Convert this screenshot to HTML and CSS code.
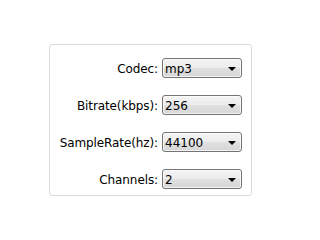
FILE: index.html
```html
<!DOCTYPE html>
<html>
<head>
<meta charset="utf-8">
<link rel="stylesheet" href="styles.css">
</head>
<body>
<div class="group">
  <div class="form">
    <label class="label">Codec:</label>
    <div class="combo"><span class="value">mp3</span><span class="arrow"></span></div>
    <label class="label">Bitrate(kbps):</label>
    <div class="combo"><span class="value">256</span><span class="arrow"></span></div>
    <label class="label">SampleRate(hz):</label>
    <div class="combo"><span class="value">44100</span><span class="arrow"></span></div>
    <label class="label">Channels:</label>
    <div class="combo"><span class="value">2</span><span class="arrow"></span></div>
  </div>
</div>
</body>
</html>
```

FILE: styles.css
```css
html, body {
  margin: 0;
  padding: 0;
  background: #ffffff;
}
body {
  width: 302px;
  height: 240px;
  font-family: "DejaVu Sans", "Noto Sans", sans-serif;
  font-size: 12px;
  color: #000000;
}
.group {
  box-sizing: border-box;
  margin: 44px 0 0 49px;
  width: 203px;
  height: 152px;
  border: 1px solid #d3dde3;
  border-radius: 3px;
  padding: 12px 9px 0 9px;
}
.form {
  display: grid;
  grid-template-columns: 1fr 80px;
  column-gap: 4px;
  row-gap: 15px;
  align-items: center;
}
.label {
  justify-self: end;
  white-space: nowrap;
  line-height: 20px;
  padding-top: 2px;
  letter-spacing: -0.1px;
}
.combo {
  box-sizing: border-box;
  height: 20px;
  border: 1px solid #747474;
  border-radius: 3px;
  background: linear-gradient(#f4f4f4 0%, #ececec 50%, #e0e0e0 51%, #d6d6d6 100%);
  box-shadow: inset 0 0 0 1px rgba(255,255,255,0.7);
  display: flex;
  align-items: center;
  justify-content: space-between;
  padding: 0 5px 0 2px;
}
.value {
  line-height: 18px;
  padding-top: 1px;
}
.arrow {
  width: 0;
  height: 0;
  border-left: 4px solid transparent;
  border-right: 4px solid transparent;
  border-top: 4px solid #000000;
  margin-top: 2px;
}
```
